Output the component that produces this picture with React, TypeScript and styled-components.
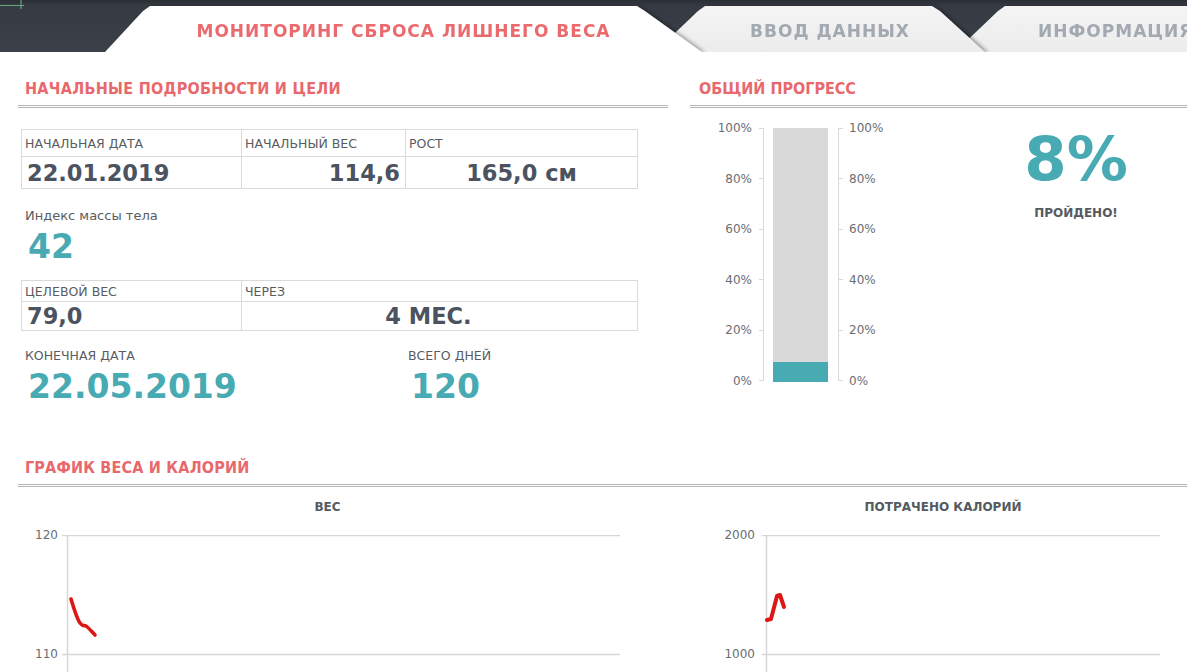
import React from "react";
import styled, { createGlobalStyle } from "styled-components";

const TEAL = "#48aab3";
const RED = "#e8686c";
const INK = "#4b5360";
const LABEL = "#585c62";
const GRID = "#d6d6d6";

const GlobalStyle = createGlobalStyle`
  html, body {
    margin: 0;
    padding: 0;
    overflow: hidden;
    background: #ffffff;
  }

  body {
    font-family: "DejaVu Sans", Verdana, sans-serif;
    color: ${LABEL};
  }
`;

const tabs = [
  { title: "МОНИТОРИНГ СБРОСА ЛИШНЕГО ВЕСА", active: true, width: 597, overlap: 0, left: 45, right: 57, pad: 0, align: "center" },
  { title: "ВВОД ДАННЫХ", active: false, width: 330, overlap: 47, left: 50, right: 45, pad: 20, align: "center" },
  { title: "ИНФОРМАЦИЯ", active: false, width: 320, overlap: 30, left: 50, right: 45, pad: 83, align: "flex-start" },
];

const startRow = [
  { label: "НАЧАЛЬНАЯ ДАТА", value: "22.01.2019", align: "left" },
  { label: "НАЧАЛЬНЫЙ ВЕС", value: "114,6", align: "right" },
  { label: "РОСТ", value: "165,0 см", align: "center" },
];

const goalRow = [
  { label: "ЦЕЛЕВОЙ ВЕС", value: "79,0", align: "left" },
  { label: "ЧЕРЕЗ", value: "4 МЕС.", align: "center" },
];

const percents = ["100%", "80%", "60%", "40%", "20%", "0%"];

const App = () => {
  return (
    <Page>
      <GlobalStyle />
      <TabBar>
        <CellMark width="26" height="10" viewBox="0 0 26 10">
          <path d="M0 5.5 H21 M21 0 V9 M21 5.5 H24" stroke="#6aa57a" strokeWidth="1.2" fill="none" />
        </CellMark>
        {tabs.map((t, i) => (
          <TabLayer key={t.title} $layer={tabs.length - i} $overlap={t.overlap}>
            <Tab
              $active={t.active}
              $width={t.width}
              $left={t.left}
              $right={t.right}
              $pad={t.pad}
              $align={t.align}
            >
              {t.title}
            </Tab>
          </TabLayer>
        ))}
      </TabBar>

      <Content>
        <TopRow>
          <Section>
            <SectionHeader $pad={7} $top={28} $spacing={0.3}>НАЧАЛЬНЫЕ ПОДРОБНОСТИ И ЦЕЛИ</SectionHeader>

            <InfoTable $cols="220px 164px 232px" $top={21}>
              {startRow.map((c) => (
                <LabelCell key={c.label} $h={27}>{c.label}</LabelCell>
              ))}
              {startRow.map((c) => (
                <ValueCell key={c.value} $h={32} $align={c.align}>{c.value}</ValueCell>
              ))}
            </InfoTable>

            <StatBlock $top={19} $left={7}>
              <StatLabel $size={13}>Индекс массы тела</StatLabel>
              <StatValue $size={33}>42</StatValue>
            </StatBlock>

            <InfoTable $cols="220px 396px" $top={15}>
              {goalRow.map((c) => (
                <LabelCell key={c.label} $h={21}>{c.label}</LabelCell>
              ))}
              {goalRow.map((c) => (
                <ValueCell key={c.value} $h={29} $align={c.align} $shift={c.align === "center" ? 22 : 0}>
                  {c.value}
                </ValueCell>
              ))}
            </InfoTable>

            <EndRow>
              <StatBlock $top={0} $left={0}>
                <StatLabel $size={12.5}>КОНЕЧНАЯ ДАТА</StatLabel>
                <StatValue $size={33}>22.05.2019</StatValue>
              </StatBlock>
              <StatBlock $top={0} $left={0}>
                <StatLabel $size={12.5}>ВСЕГО ДНЕЙ</StatLabel>
                <StatValue $size={33}>120</StatValue>
              </StatBlock>
            </EndRow>
          </Section>

          <Section>
            <SectionHeader $pad={9} $top={28} $spacing={0}>ОБЩИЙ ПРОГРЕСС</SectionHeader>
            <ProgressRow>
              <AxisLabels $width={62} $side="right">
                {percents.map((p) => (
                  <AxisLabel key={p}>{p}</AxisLabel>
                ))}
              </AxisLabels>
              <Ticks $side="left">
                {percents.map((p) => (
                  <Tick key={p} />
                ))}
              </Ticks>
              <Bar>
                <BarFill style={{ height: "8%" }} />
              </Bar>
              <Ticks $side="right">
                {percents.map((p) => (
                  <Tick key={p} />
                ))}
              </Ticks>
              <AxisLabels $width={40} $side="left">
                {percents.map((p) => (
                  <AxisLabel key={p}>{p}</AxisLabel>
                ))}
              </AxisLabels>
              <PercentBlock>
                <BigPercent>8%</BigPercent>
                <PercentCaption>ПРОЙДЕНО!</PercentCaption>
              </PercentBlock>
            </ProgressRow>
          </Section>
        </TopRow>

        <SectionHeader $pad={7} $top={54} $spacing={0.2}>ГРАФИК ВЕСА И КАЛОРИЙ</SectionHeader>

        <Charts>
          <ChartBox $width={585}>
            <ChartTitle>ВЕС</ChartTitle>
            <PlotRow>
              <YLabels $width={23} $gap={4}>
                <AxisLabel>120</AxisLabel>
                <AxisLabel>110</AxisLabel>
              </YLabels>
              <svg width="558" height="140" viewBox="0 0 558 140">
                <line x1="0" y1="0.5" x2="558" y2="0.5" stroke={GRID} strokeWidth="1.5" />
                <line x1="0" y1="119.5" x2="558" y2="119.5" stroke={GRID} strokeWidth="1.5" />
                <line x1="5.5" y1="0" x2="5.5" y2="140" stroke={GRID} strokeWidth="1.5" />
                <path
                  d="M9 64 C 12 74, 15 84, 18 88 S 22 90, 24 91 S 30 97, 33 100"
                  stroke="#dd1616"
                  strokeWidth="3.6"
                  fill="none"
                  strokeLinecap="round"
                  strokeLinejoin="round"
                />
              </svg>
            </PlotRow>
          </ChartBox>

          <ChartBox $width={446}>
            <ChartTitle>ПОТРАЧЕНО КАЛОРИЙ</ChartTitle>
            <PlotRow>
              <YLabels $width={35} $gap={7}>
                <AxisLabel>2000</AxisLabel>
                <AxisLabel>1000</AxisLabel>
              </YLabels>
              <svg width="398" height="140" viewBox="0 0 398 140">
                <line x1="0" y1="0.5" x2="398" y2="0.5" stroke={GRID} strokeWidth="1.5" />
                <line x1="0" y1="119.5" x2="398" y2="119.5" stroke={GRID} strokeWidth="1.5" />
                <line x1="4.5" y1="0" x2="4.5" y2="140" stroke={GRID} strokeWidth="1.5" />
                <path
                  d="M5 85 L9 84 L15 61 L18 60 L22 72"
                  stroke="#dd1616"
                  strokeWidth="4"
                  fill="none"
                  strokeLinecap="round"
                  strokeLinejoin="round"
                />
              </svg>
            </PlotRow>
          </ChartBox>
        </Charts>
      </Content>
    </Page>
  );
};

export default App;

const Page = styled.div`
  width: 1187px;
  height: 672px;
  overflow: hidden;
  background: #ffffff;
`;

const TabBar = styled.div`
  position: relative;
  height: 52px;

  display: flex;
  align-items: flex-end;

  padding-left: 105px;
  box-sizing: border-box;
  overflow: hidden;

  background: linear-gradient(#2a2e34 0, #363b43 6px, #3b4049 100%);
`;

const CellMark = styled.svg`
  position: absolute;
  top: 0;
  left: 0;
`;

const TabLayer = styled.div<{ $layer: number; $overlap: number }>`
  position: relative;
  z-index: ${(p) => p.$layer};
  flex-shrink: 0;
  margin-left: ${(p) => -p.$overlap}px;
  filter: drop-shadow(3px 1px 2px rgba(0, 0, 0, 0.45));
`;

const Tab = styled.div<{
  $active: boolean;
  $width: number;
  $left: number;
  $right: number;
  $pad: number;
  $align: string;
}>`
  width: ${(p) => p.$width}px;
  height: 46px;

  display: flex;
  align-items: center;
  justify-content: ${(p) => p.$align};

  padding: 4px 0 0 ${(p) => p.$pad}px;
  box-sizing: border-box;

  background: ${(p) => (p.$active ? "#ffffff" : "linear-gradient(#f4f4f4, #ececec)")};
  clip-path: polygon(
    0 100%,
    ${(p) => p.$left - 7}px 5px,
    ${(p) => p.$left}px 0,
    calc(100% - ${(p) => p.$right + 8}px) 0,
    calc(100% - ${(p) => p.$right}px) 5px,
    100% 100%
  );

  font-size: 17px;
  font-weight: bold;
  letter-spacing: 1px;
  white-space: nowrap;
  color: ${(p) => (p.$active ? "#ea6a6e" : "#a2a9b1")};
`;

const Content = styled.div`
  padding-left: 18px;
`;

const TopRow = styled.div`
  display: grid;
  grid-template-columns: 650px 1fr;
  column-gap: 22px;
`;

const Section = styled.div`
  display: flex;
  flex-direction: column;
`;

const SectionHeader = styled.div<{ $pad: number; $top: number; $spacing: number }>`
  margin-top: ${(p) => p.$top}px;
  padding: 0 0 7px ${(p) => p.$pad}px;
  border-bottom: 3px double #b6b6b6;

  font-family: "DejaVu Sans Condensed", "DejaVu Sans", sans-serif;
  font-size: 16px;
  font-weight: bold;
  line-height: 18px;
  letter-spacing: ${(p) => p.$spacing}px;
  color: ${RED};
`;

const InfoTable = styled.div<{ $cols: string; $top: number }>`
  display: grid;
  grid-template-columns: ${(p) => p.$cols};

  width: max-content;
  margin: ${(p) => p.$top}px 0 0 3px;

  border-top: 1px solid #dadada;
  border-left: 1px solid #dadada;
`;

const LabelCell = styled.div<{ $h: number }>`
  height: ${(p) => p.$h}px;

  display: flex;
  align-items: center;

  padding-left: 3px;
  box-sizing: border-box;
  border-right: 1px solid #dadada;
  border-bottom: 1px solid #dadada;

  font-size: 12.5px;
  color: ${LABEL};
`;

const ValueCell = styled.div<{ $h: number; $align: string; $shift?: number }>`
  height: ${(p) => p.$h}px;

  display: flex;
  align-items: center;
  justify-content: ${(p) =>
    p.$align === "right" ? "flex-end" : p.$align === "center" ? "center" : "flex-start"};

  padding: 0 ${(p) => (p.$align === "right" ? 5 : p.$shift ?? 0)}px 0
    ${(p) => (p.$align === "left" ? 5 : 0)}px;
  box-sizing: border-box;
  border-right: 1px solid #dadada;
  border-bottom: 1px solid #dadada;

  font-size: 22.5px;
  font-weight: bold;
  color: ${INK};
`;

const StatBlock = styled.div<{ $top: number; $left: number }>`
  display: flex;
  flex-direction: column;
  gap: 4px;
  margin: ${(p) => p.$top}px 0 0 ${(p) => p.$left}px;
`;

const StatLabel = styled.div<{ $size: number }>`
  font-size: ${(p) => p.$size}px;
  line-height: 16px;
  color: ${LABEL};
`;

const StatValue = styled.div<{ $size: number }>`
  padding-left: 3px;
  font-size: ${(p) => p.$size}px;
  font-weight: bold;
  line-height: ${(p) => p.$size + 4}px;
  color: ${TEAL};
`;

const EndRow = styled.div`
  display: grid;
  grid-template-columns: 383px auto;
  margin: 17px 0 0 7px;
`;

const ProgressRow = styled.div`
  display: flex;
  align-items: flex-start;
  margin-top: 20px;
`;

const AxisLabels = styled.div<{ $width: number; $side: "left" | "right" }>`
  width: ${(p) => p.$width}px;
  height: 253px;

  display: flex;
  flex-direction: column;
  justify-content: space-between;
  align-items: ${(p) => (p.$side === "right" ? "flex-end" : "flex-start")};

  margin-left: ${(p) => (p.$side === "left" ? 6 : 0)}px;
`;

const AxisLabel = styled.div`
  height: 0;
  display: flex;
  align-items: center;

  font-size: 12px;
  color: #6a6d72;
  white-space: nowrap;
`;

const Ticks = styled.div<{ $side: "left" | "right" }>`
  width: 4px;
  height: 253px;

  display: flex;
  flex-direction: column;
  justify-content: space-between;

  margin: 0 ${(p) => (p.$side === "left" ? 9 : 0)}px 0 ${(p) => (p.$side === "left" ? 7 : 10)}px;
  border-${(p) => (p.$side === "left" ? "right" : "left")}: 1px solid #d9d9d9;
`;

const Tick = styled.div`
  height: 1px;
  background: #d9d9d9;
`;

const Bar = styled.div`
  width: 55px;
  height: 254px;

  display: flex;
  flex-direction: column;
  justify-content: flex-end;

  background: #d9d9d9;
`;

const BarFill = styled.div`
  background: ${TEAL};
`;

const PercentBlock = styled.div`
  width: 200px;
  margin: 0 0 0 87px;

  display: flex;
  flex-direction: column;
  align-items: center;
`;

const BigPercent = styled.div`
  font-size: 61px;
  font-weight: bold;
  line-height: 61px;
  color: ${TEAL};
`;

const PercentCaption = styled.div`
  margin-top: 17px;
  font-size: 12px;
  font-weight: bold;
  line-height: 14px;
  color: #565a60;
`;

const Charts = styled.div`
  display: flex;
  gap: 100px;
  padding-left: 17px;
  margin-top: 13px;
`;

const ChartBox = styled.div<{ $width: number }>`
  width: ${(p) => p.$width}px;
  display: flex;
  flex-direction: column;
`;

const ChartTitle = styled.div`
  text-align: center;
  font-size: 12px;
  font-weight: bold;
  line-height: 14px;
  color: #555a61;
`;

const PlotRow = styled.div`
  display: flex;
  align-items: flex-start;
  margin-top: 21px;
`;

const YLabels = styled.div<{ $width: number; $gap: number }>`
  width: ${(p) => p.$width}px;
  height: 119px;
  margin-right: ${(p) => p.$gap}px;

  display: flex;
  flex-direction: column;
  justify-content: space-between;
  align-items: flex-end;
`;
